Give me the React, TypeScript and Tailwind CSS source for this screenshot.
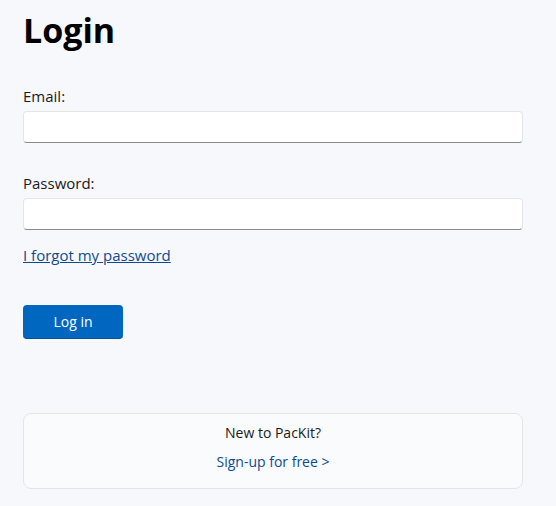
export default function App() {
  return (
    <div
      className="min-h-screen bg-[#f7f8fc] px-[23px] pt-[7px] text-[#1a1a1a]"
      style={{ fontFamily: '"Open Sans", "Noto Sans", sans-serif' }}
    >
      {/* Heading */}
      <h1 className="text-[34px] font-bold leading-[46px] text-black">Login</h1>

      {/* Form */}
      <form className="mt-[33px] w-[500px]" onSubmit={e => e.preventDefault()}>
        <label className="block text-[15px] leading-[20px]">Email:</label>
        <input
          type="email"
          className="mt-[5px] block h-[32px] w-full rounded-[4px] border border-[#e5e5e5] border-b-[#8a8a8a] bg-white px-2 outline-none"
        />

        <label className="mt-[30px] block text-[15px] leading-[20px]">Password:</label>
        <input
          type="password"
          className="mt-[5px] block h-[32px] w-full rounded-[4px] border border-[#e5e5e5] border-b-[#8a8a8a] bg-white px-2 outline-none"
        />

        <a href="#" className="mt-[14px] inline-block text-[15px] leading-[22px] text-[#0f4a8f] underline">
          I forgot my password
        </a>

        <div className="mt-[38px]">
          <button
            type="submit"
            className="h-[34px] w-[100px] rounded-[4px] border-b border-[#00509a] bg-[#0067c0] text-[14px] text-white"
          >
            Log in
          </button>
        </div>
      </form>

      {/* Sign-up card */}
      <div className="mt-[74px] flex w-[500px] flex-col items-center rounded-[8px] border border-[#e5e5e5] bg-[#fafbfd] pt-[9px] pb-[16px] text-[14px]">
        <p className="leading-[20px] text-[#1a1a1a]">New to PacKit?</p>
        <a href="#" className="mt-[9px] leading-[20px] text-[#0f4a8f]">
          Sign-up for free &gt;
        </a>
      </div>
    </div>
  )
}
